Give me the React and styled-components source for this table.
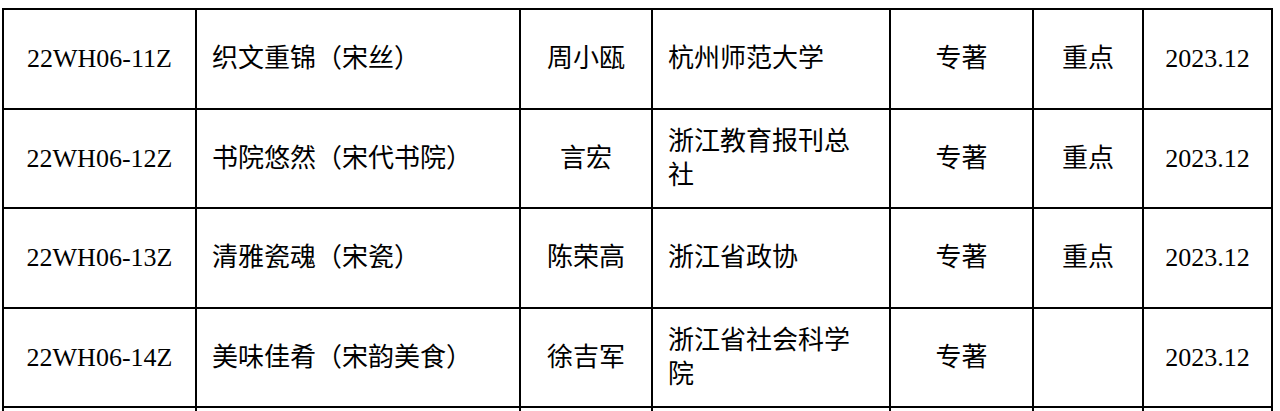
import React from "react";
import styled, { createGlobalStyle } from "styled-components";

const GlobalStyle = createGlobalStyle`
  html, body {
    margin: 0;
    padding: 0;
    background: #ffffff;
  }
  body {
    font-family: "Liberation Serif", "Noto Sans CJK SC", serif;
    color: #000000;
  }
`;

// widths measured line-to-line on the reference
const COLUMNS = "193px 324px 132px 238px 143px 110px 129px";

const Page = styled.div`
  padding: 8px 0 0 2px;
  height: 411px;
  overflow: hidden;
  box-sizing: border-box;
`;

const Grid = styled.div`
  display: grid;
  grid-template-columns: ${COLUMNS};
  width: max-content;
  border-top: 2px solid #000;
  border-left: 2px solid #000;
`;

const Cell = styled.div`
  box-sizing: border-box;
  height: ${(p) => p.$h}px;
  border-right: 2px solid #000;
  border-bottom: 2px solid #000;
  display: flex;
  align-items: center;
  justify-content: ${(p) => (p.$left ? "flex-start" : "center")};
  padding-left: ${(p) => (p.$left ? "15px" : "4px")};
  padding-right: ${(p) => (p.$left ? "14px" : "4px")};
  font-size: 26px;
  line-height: 34px;
  text-align: ${(p) => (p.$left ? "left" : "center")};
  white-space: ${(p) => (p.$wrap ? "normal" : "nowrap")};
  word-break: break-all;
`;

const rows = [
  ["22WH06-11Z", "织文重锦（宋丝）", "周小瓯", "杭州师范大学", "专著", "重点", "2023.12"],
  ["22WH06-12Z", "书院悠然（宋代书院）", "言宏", "浙江教育报刊总社", "专著", "重点", "2023.12"],
  ["22WH06-13Z", "清雅瓷魂（宋瓷）", "陈荣高", "浙江省政协", "专著", "重点", "2023.12"],
  ["22WH06-14Z", "美味佳肴（宋韵美食）", "徐吉军", "浙江省社会科学院", "专著", "", "2023.12"],
  ["", "", "", "", "", "", ""],
];

const heights = [100, 99, 100, 99, 60];
const leftCols = [1, 3];

export default function App() {
  return (
    <>
      <GlobalStyle />
      <Page>
        <Grid>
          {rows.map((row, r) =>
            row.map((text, c) => (
              <Cell
                key={`${r}-${c}`}
                $h={heights[r]}
                $left={leftCols.includes(c)}
                $wrap={c === 3}
              >
                {text}
              </Cell>
            ))
          )}
        </Grid>
      </Page>
    </>
  );
}
